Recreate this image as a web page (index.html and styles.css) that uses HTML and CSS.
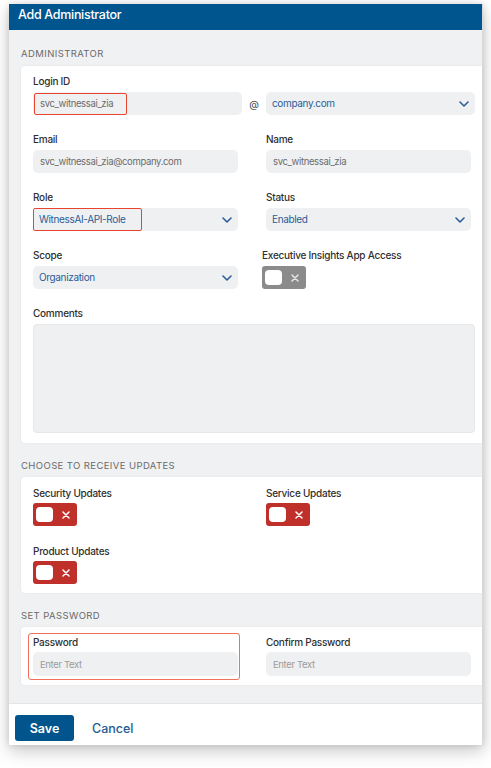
FILE: index.html
```html
<!DOCTYPE html>
<html>
<head>
<meta charset="utf-8">
<link rel="stylesheet" href="styles.css">
</head>
<body>
<div class="page">
  <div class="dialog">
    <div class="dialog-header">Add Administrator</div>
    <div class="dialog-body">
      <div class="section-title first">ADMINISTRATOR</div>
      <div class="card">
        <div class="field">
          <div class="label">Login ID</div>
          <div class="login-row">
            <div class="input login-input"><span class="value-gray">svc_witnessai_zia</span><span class="mark mark-login"></span></div>
            <div class="at">@</div>
            <div class="select login-select"><span class="value-blue">company.com</span>
              <svg class="chev" viewBox="0 0 10 6" width="10" height="6"><path d="M1 1l4 4 4-4" fill="none" stroke="#2b5d97" stroke-width="1.6" stroke-linecap="round" stroke-linejoin="round"/></svg>
            </div>
          </div>
        </div>
        <div class="grid">
          <div class="field">
            <div class="label">Email</div>
            <div class="input"><span class="value-gray">svc_witnessai_zia@company.com</span></div>
          </div>
          <div class="field">
            <div class="label">Name</div>
            <div class="input"><span class="value-gray">svc_witnessai_zia</span></div>
          </div>
          <div class="field">
            <div class="label">Role</div>
            <div class="select"><span class="value-blue">WitnessAI-API-Role</span>
              <svg class="chev" viewBox="0 0 10 6" width="10" height="6"><path d="M1 1l4 4 4-4" fill="none" stroke="#2b5d97" stroke-width="1.6" stroke-linecap="round" stroke-linejoin="round"/></svg>
              <span class="mark mark-role"></span>
            </div>
          </div>
          <div class="field">
            <div class="label">Status</div>
            <div class="select"><span class="value-blue">Enabled</span>
              <svg class="chev" viewBox="0 0 10 6" width="10" height="6"><path d="M1 1l4 4 4-4" fill="none" stroke="#2b5d97" stroke-width="1.6" stroke-linecap="round" stroke-linejoin="round"/></svg>
            </div>
          </div>
          <div class="field">
            <div class="label">Scope</div>
            <div class="select"><span class="value-blue">Organization</span>
              <svg class="chev" viewBox="0 0 10 6" width="10" height="6"><path d="M1 1l4 4 4-4" fill="none" stroke="#2b5d97" stroke-width="1.6" stroke-linecap="round" stroke-linejoin="round"/></svg>
            </div>
          </div>
          <div class="field shift">
            <div class="label">Executive Insights App Access</div>
            <div class="toggle toggle-gray"><span class="knob"></span>
              <svg class="x" viewBox="0 0 8 8" width="8" height="8"><path d="M1 1l6 6M7 1L1 7" stroke="#e6e6e6" stroke-width="1.5" stroke-linecap="round"/></svg>
            </div>
          </div>
        </div>
        <div class="field">
          <div class="label">Comments</div>
          <div class="textarea"></div>
        </div>
      </div>

      <div class="section-title">CHOOSE TO RECEIVE UPDATES</div>
      <div class="card card-updates">
        <div class="grid">
          <div class="field">
            <div class="label">Security Updates</div>
            <div class="toggle"><span class="knob"></span>
              <svg class="x" viewBox="0 0 8 8" width="8" height="8"><path d="M1 1l6 6M7 1L1 7" stroke="#fff" stroke-width="1.5" stroke-linecap="round"/></svg>
            </div>
          </div>
          <div class="field">
            <div class="label">Service Updates</div>
            <div class="toggle"><span class="knob"></span>
              <svg class="x" viewBox="0 0 8 8" width="8" height="8"><path d="M1 1l6 6M7 1L1 7" stroke="#fff" stroke-width="1.5" stroke-linecap="round"/></svg>
            </div>
          </div>
          <div class="field">
            <div class="label">Product Updates</div>
            <div class="toggle"><span class="knob"></span>
              <svg class="x" viewBox="0 0 8 8" width="8" height="8"><path d="M1 1l6 6M7 1L1 7" stroke="#fff" stroke-width="1.5" stroke-linecap="round"/></svg>
            </div>
          </div>
        </div>
      </div>

      <div class="section-title">SET PASSWORD</div>
      <div class="card card-pw">
        <div class="grid">
          <div class="field pw-field">
            <div class="label">Password</div>
            <div class="input"><span class="placeholder">Enter Text</span></div>
            <span class="mark mark-pw"></span>
          </div>
          <div class="field">
            <div class="label">Confirm Password</div>
            <div class="input"><span class="placeholder">Enter Text</span></div>
          </div>
        </div>
      </div>
    </div>
    <div class="dialog-footer">
      <button class="btn-save">Save</button>
      <button class="btn-cancel">Cancel</button>
    </div>
  </div>
</div>
</body>
</html>
```

FILE: styles.css
```css
* { box-sizing: border-box; }
html, body { margin: 0; padding: 0; background: #ffffff; }
body { font-family: Inter, "Noto Sans", "Liberation Sans", sans-serif; color: #333; }

.page { padding: 4px 8px 0 9px; height: 768px; overflow: hidden; }

.dialog {
  width: 474px;
  background: #f0f1f3;
  box-shadow: 0 6px 16px rgba(0,0,0,0.22), 0 0 6px rgba(0,0,0,0.12);
  border-right: 1px solid #d9dadc;
}

.dialog-header {
  height: 26px;
  background: #01558f;
  color: #fff;
  font-size: 12.5px;
  font-weight: 500;
  line-height: 22px;
  padding-left: 9px;
  letter-spacing: -0.3px;
}

.dialog-body { padding: 0 0 18px 12px; }

.section-title {
  font-size: 9.5px;
  letter-spacing: 0.4px;
  color: #6a6a6a;
  line-height: 12px;
  padding-top: 17px;
  margin-bottom: 5px;
}
.section-title.first { padding-top: 18px; margin-bottom: 6px; }

.card {
  background: #fff;
  border-radius: 4px 0 0 4px;
  padding: 8px 0 10px 12px;
  box-shadow: 0 0 2px rgba(0,0,0,0.08);
}
.card-updates { padding-top: 9px; padding-bottom: 9px; }
.card-updates .grid { row-gap: 18px; }
.card-updates .label { margin-bottom: 5px; }
.card-pw { padding-bottom: 9px; }
.card-pw .label { margin-bottom: 5px; }
.card-pw .input { height: 24px; }

.grid {
  display: grid;
  grid-template-columns: 205px 205px;
  column-gap: 28px;
  row-gap: 17px;
}
.card > .field + .grid, .card > .grid + .field { margin-top: 17px; }

.field { position: relative; }
.field.shift { margin-left: -4px; }

.label {
  font-size: 10px;
  font-weight: 500;
  line-height: 12px;
  color: #2f2f2f;
  margin-bottom: 6px;
  white-space: nowrap;
  letter-spacing: -0.25px;
  padding-top: 1px;
  height: 12px;
}

.input, .select {
  position: relative;
  height: 23px;
  background: #eff0f2;
  border-radius: 5px;
  font-size: 9.5px;
  line-height: 23px;
  padding-left: 7px;
  display: flex;
  align-items: center;
  letter-spacing: -0.35px;
}
.value-gray { color: #6c6c6c; }
.value-blue { color: #2b5d97; font-size: 10px; }
.placeholder { color: #9b9b9b; }
.select { padding-left: 6px; }
.chev { position: absolute; right: 6px; top: 9px; }

.login-row { display: flex; align-items: center; }
.login-input { width: 209px; }
.login-select { width: 209px; }
.at { width: 24px; text-align: center; font-size: 10px; color: #444; }

.mark {
  position: absolute;
  border: 1.5px solid #e8452f;
  border-radius: 2px;
  pointer-events: none;
}
.mark-login { left: 1px; top: 1px; width: 93px; height: 22px; }
.select .mark-role { left: 0; top: 0; width: 109px; height: 23px; border: 1.5px solid #e8452f; }
.mark-pw { left: -5px; top: -2px; right: -2px; bottom: -4px; border-color: #f0705c; border-radius: 3px; }

.textarea {
  width: 442px;
  height: 109px;
  background: #eff0f2;
  border: 1px solid #e6e7e9;
  border-radius: 4px;
}

.toggle {
  position: relative;
  width: 44px;
  height: 23px;
  background: #bf302b;
  border-radius: 3px;
}
.toggle-gray { background: #8b8b8b; }
.knob {
  position: absolute;
  left: 3px;
  top: 4px;
  width: 17px;
  height: 15px;
  background: #fff;
  border-radius: 4px;
}
.x { position: absolute; left: 29px; top: 7.5px; }

.dialog-footer {
  height: 42px;
  background: #fff;
  border-top: 1px solid #e4e5e7;
  padding: 11px 0 0 6px;
  display: flex;
  align-items: flex-start;
}
.btn-save {
  width: 59px;
  height: 26px;
  background: #02548c;
  color: #fff;
  border: none;
  border-radius: 3px;
  font-family: inherit;
  font-size: 12.5px;
  font-weight: 600;
  padding: 0;
}
.btn-cancel {
  margin-left: 18px;
  background: none;
  border: none;
  padding: 0;
  height: 26px;
  color: #235b95;
  font-family: inherit;
  font-size: 12.5px;
  font-weight: 500;
}
```
